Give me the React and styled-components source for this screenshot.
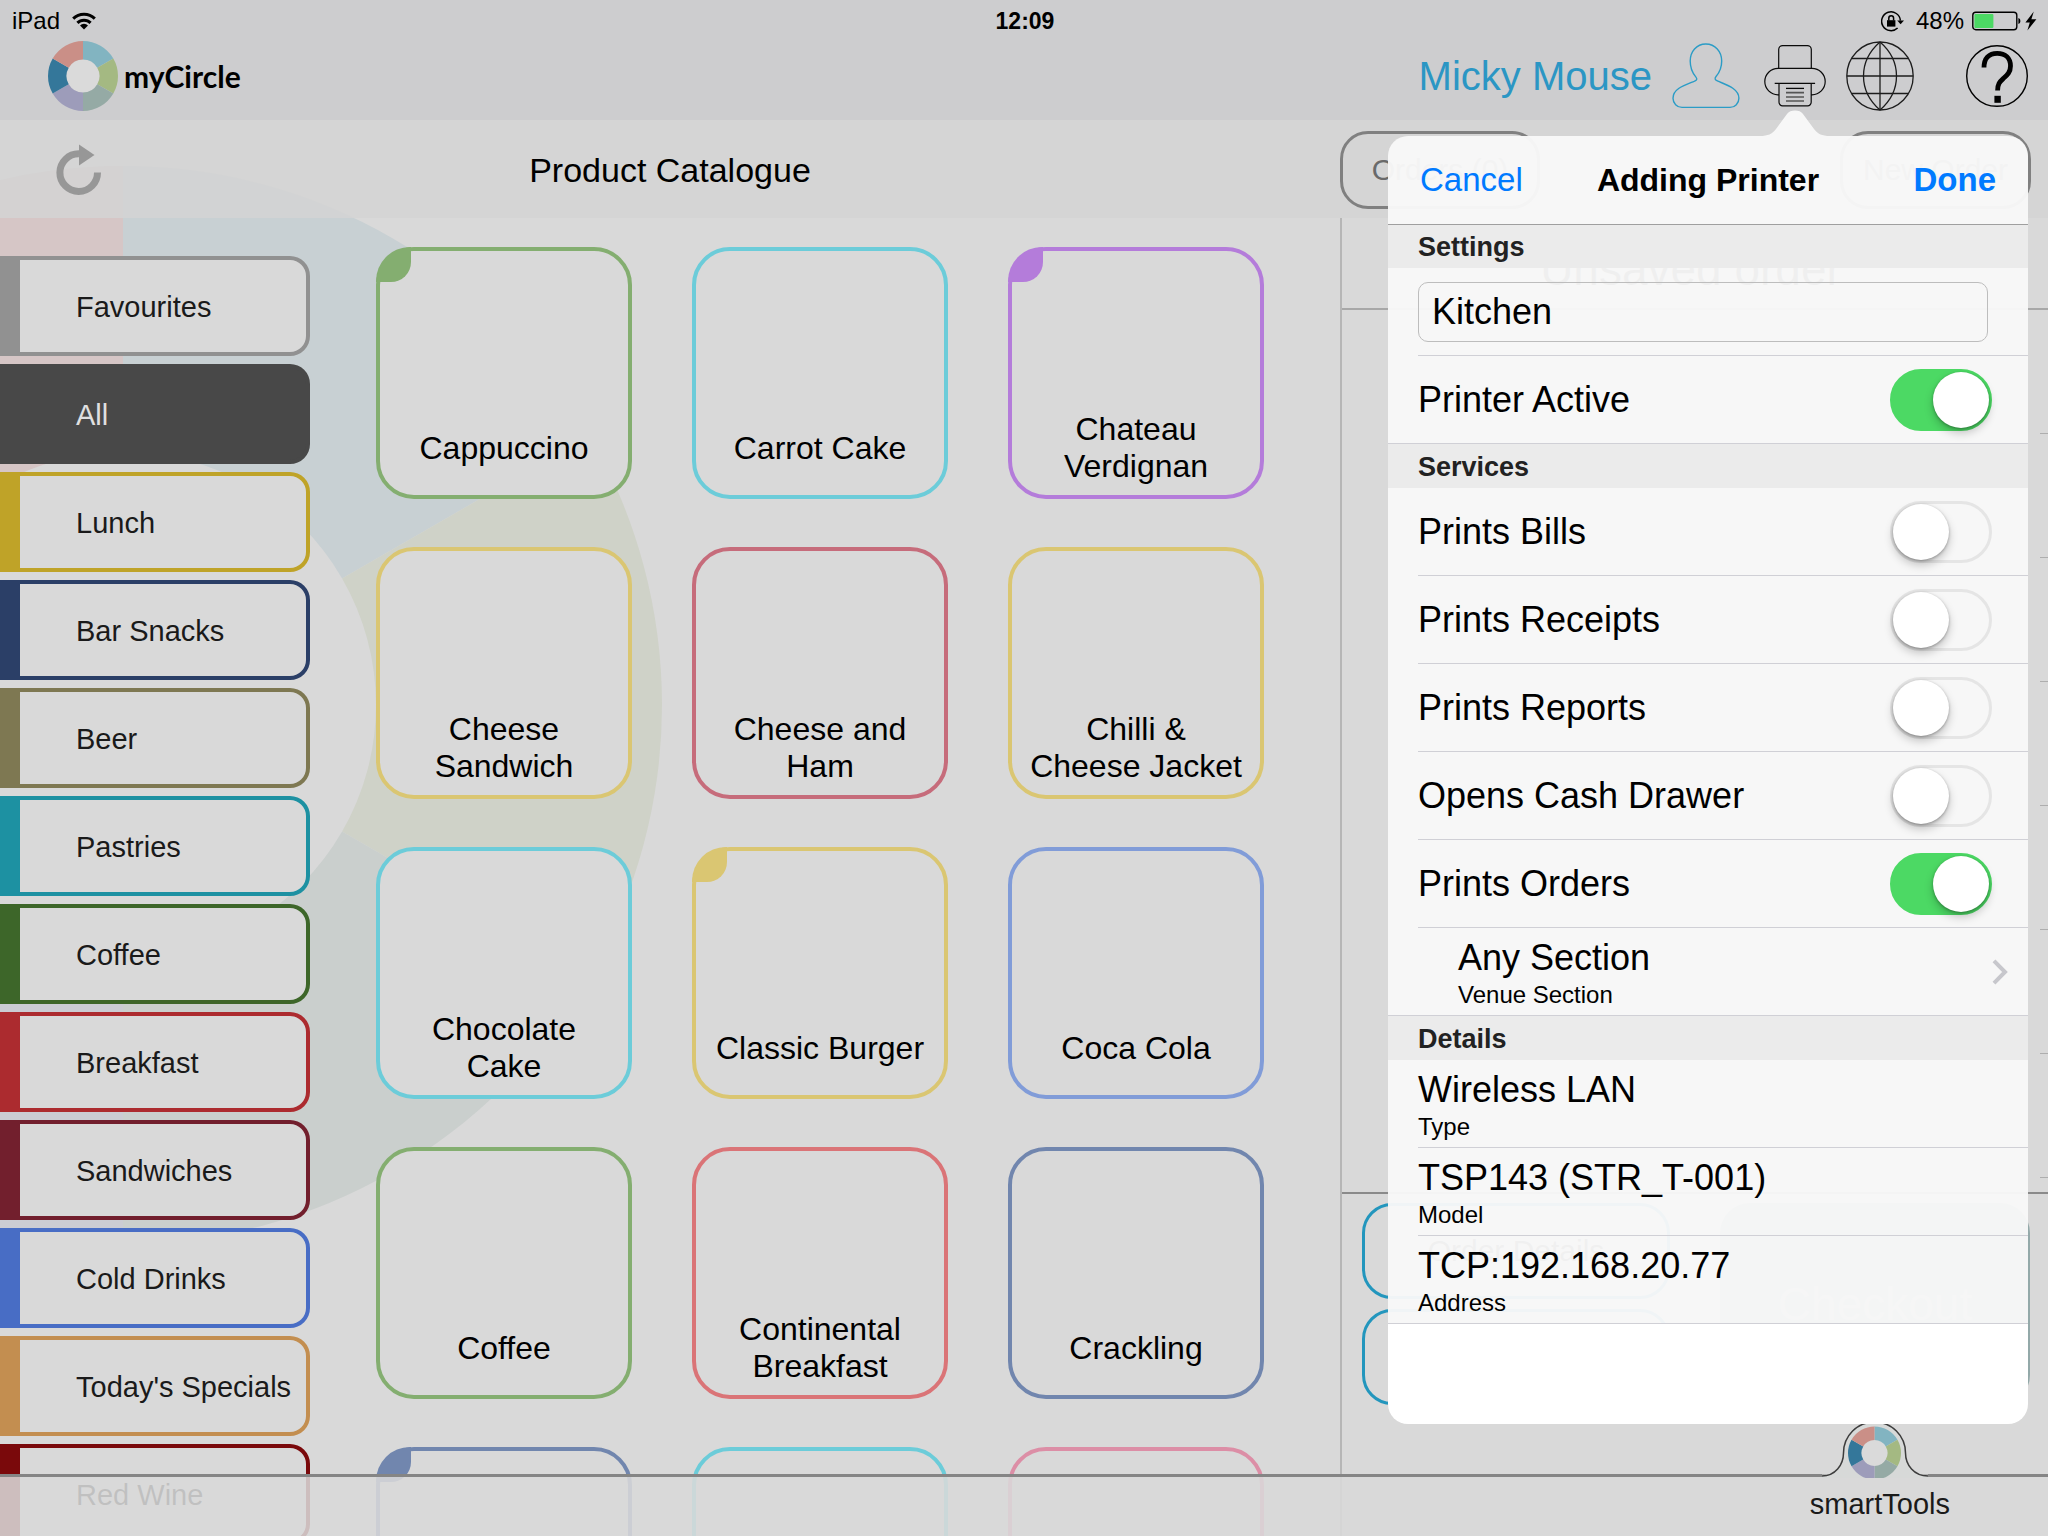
import React, { useState } from "react";
import styled, { createGlobalStyle, css } from "styled-components";

const GlobalStyle = createGlobalStyle`
  *, *::before, *::after { box-sizing: border-box; }
  body {
    margin: 0;
    background: #d9d9d9;
    color: #000;
    font-family: "Liberation Sans", Arial, Helvetica, sans-serif;
  }
  button, input { font: inherit; color: inherit; margin: 0; }
  button { background: none; border: 0; padding: 0; cursor: pointer; }
  h1, h2, h3, p, dl, dt, dd, ul { margin: 0; padding: 0; font-weight: 400; }
  ul { list-style: none; }
`;

const Page = styled.div`
  position: relative;
  display: flex;
  flex-direction: column;
  height: 100vh;
  overflow: hidden;
`;

const Backdrop = styled.svg`
  position: absolute;
  left: 0;
  top: 0;
  z-index: 0;
`;

/* ---------- header ---------- */

const Header = styled.header`
  position: relative;
  flex: none;
  height: 120px;
  background: #cdcdcf;
`;

const StatusBar = styled.div`
  display: grid;
  grid-template-columns: 1fr auto 1fr;
  align-items: center;
  height: 40px;
  padding: 2px 10px 0 12px;
  font-size: 24px;
  line-height: 28px;
`;

const StatusGroup = styled.div`
  display: flex;
  align-items: center;
  justify-content: ${(p) => (p.$end ? "flex-end" : "flex-start")};
  gap: ${(p) => (p.$end ? 8 : 12)}px;
`;

const Clock = styled.span`
  font-size: 23px;
  font-weight: 700;
`;

const RotationLock = styled.svg`
  margin-right: 4px;
`;

const NavBar = styled.div`
  display: flex;
  align-items: center;
  justify-content: space-between;
  height: 72px;
  padding: 0 20px 0 48px;
`;

const Brand = styled.a`
  display: flex;
  align-items: center;
  gap: 6px;
  color: #000;
  text-decoration: none;
  font-family: Lato, "Liberation Sans", sans-serif;
  font-size: 30px;
  font-weight: 700;
`;

const NavActions = styled.nav`
  display: flex;
  align-items: center;
  gap: 20px;
`;

const UserButton = styled.button`
  display: flex;
  align-items: center;
  gap: 20px;
  margin-right: 4px;
  color: #2b96c4;
  font-size: 40px;
  line-height: 48px;
`;

const IconButton = styled.button`
  display: flex;
  margin-left: ${(p) => p.$gap || 0}px;
`;

/* ---------- toolbar ---------- */

const Toolbar = styled.div`
  position: relative;
  flex: none;
  display: flex;
  height: 98px;
  background: rgba(212, 212, 212, 0.85);
`;

const CatalogueBar = styled.div`
  flex: 1;
  display: grid;
  grid-template-columns: 80px 1fr 80px;
  align-items: center;
  padding: 2px 56px 0;
`;

const Title = styled.h1`
  font-size: 34px;
  line-height: 40px;
  text-align: center;
`;

const OrderBar = styled.div`
  flex: none;
  display: flex;
  align-items: center;
  justify-content: space-between;
  width: 708px;
  padding: 2px 17px 0 0;
`;

const PillButton = styled.button`
  width: ${(p) => p.$width}px;
  height: 78px;
  border: 3px solid #808080;
  border-radius: 28px;
  color: #6a6a6a;
  font-size: 30px;
`;

/* ---------- workspace ---------- */

const Workspace = styled.main`
  position: relative;
  flex: 1;
  display: flex;
  min-height: 0;
`;

const Sidebar = styled.ul`
  flex: none;
  display: flex;
  flex-direction: column;
  gap: 8px;
  width: 310px;
  padding-top: 38px;
  overflow: hidden;
`;

const CategoryButton = styled.button`
  display: block;
  width: 100%;
  height: 100px;
  padding: 2px 0 0 56px;
  border: 4px solid ${(p) => p.$color};
  border-left-width: 20px;
  border-radius: 0 20px 20px 0;
  background: ${(p) => (p.$active ? p.$color : "#d9d9d9")};
  color: ${(p) => (p.$active ? "#e0e0e0" : "#1a1a1a")};
  font-size: 29px;
  line-height: 36px;
  text-align: left;
  white-space: nowrap;
`;

const ProductGrid = styled.div`
  flex: 1;
  display: grid;
  grid-template-columns: repeat(3, 1fr);
  grid-auto-rows: 252px;
  gap: 48px 60px;
  padding: 29px 76px 0 66px;
  overflow: hidden;
`;

const ProductTile = styled.button`
  position: relative;
  display: flex;
  flex-direction: column;
  justify-content: flex-end;
  padding: 0 16px 10px;
  border: 4px solid ${(p) => p.$color};
  border-radius: 38px;
  background: #d9d9d9;
  font-size: 32px;
  line-height: 37px;

  ${(p) =>
    p.$tagged &&
    css`
      &::before {
        content: "";
        position: absolute;
        left: -4px;
        top: -4px;
        width: 35px;
        height: 35px;
        border-radius: 34px 0 20px 0;
        background: ${p.$color};
      }
    `}
`;

const ProductName = styled.span`
  display: flex;
  align-items: center;
  justify-content: center;
  min-height: 74px;
  text-align: center;
`;

/* ---------- order panel ---------- */

const OrderPanel = styled.aside`
  flex: none;
  display: flex;
  flex-direction: column;
  width: 708px;
  border-left: 2px solid #b6b6b6;
`;

const OrderHeading = styled.h2`
  flex: none;
  height: 92px;
  padding: 24px 8px 0 0;
  border-bottom: 2px solid #a8a8a8;
  color: #111;
  font-size: 46px;
  line-height: 54px;
  text-align: center;
`;

const OrderLines = styled.div`
  flex: 1;
  display: flex;
  flex-direction: column;
  align-items: flex-end;
  min-height: 0;
  overflow: hidden;
`;

const OrderLine = styled.div`
  flex: none;
  width: 8px;
  height: 124px;
  border-bottom: 1px solid #aeaeae;
`;

const OrderActions = styled.div`
  flex: none;
  display: grid;
  grid-template-columns: 308px 1fr;
  grid-template-rows: 96px 96px;
  gap: 10px 50px;
  padding: 9px 18px 131px 20px;
  border-top: 2px solid #8a8a8a;
`;

const OutlineButton = styled.button`
  border: 3px solid #2396bd;
  border-radius: 30px;
  color: #222;
  font-size: 30px;
`;

const CheckoutButton = styled.button`
  grid-column: 2;
  grid-row: 1 / span 2;
  border-radius: 30px;
  background: #93a9a9;
  color: #b9c4c4;
  font-size: 46px;
`;

/* ---------- bottom bar ---------- */

const BottomBar = styled.footer`
  position: absolute;
  left: 0;
  right: 0;
  bottom: 0;
  display: flex;
  justify-content: flex-end;
  height: 62px;
  padding-right: 98px;
  border-top: 3px solid #858585;
  background: rgba(217, 217, 217, 0.87);
`;

const ToolsButton = styled.button`
  display: flex;
  flex-direction: column;
  align-items: center;
  justify-content: flex-end;
  height: 114px;
  margin-top: -55px;
  padding-bottom: 16px;
  color: #1a1a1a;
  font-size: 29px;
  line-height: 32px;

  svg { margin-right: 10px; margin-bottom: 10px; }
`;

/* ---------- popover ---------- */

const Popover = styled.div`
  position: absolute;
  top: 110px;
  right: 20px;
  z-index: 5;
  width: 640px;
`;

const PopoverArrow = styled.svg`
  display: block;
  margin-left: 372px;
`;

const PopoverBody = styled.form`
  border-radius: 20px;
  overflow: hidden;
`;

const translucent = "rgba(248, 248, 248, 0.965)";

const PopoverHeader = styled.div`
  display: grid;
  grid-template-columns: 1fr auto 1fr;
  align-items: center;
  height: 88px;
  padding: 0 32px;
  background: ${translucent};
  font-size: 33px;
  line-height: 40px;
`;

const PopoverTitle = styled.h2`
  && { font-weight: 700; }
  font-size: 32px;
`;

const HeaderAction = styled.button`
  justify-self: ${(p) => (p.$primary ? "end" : "start")};
  color: #007aff;
  font-weight: ${(p) => (p.$primary ? 700 : 400)};
`;

const SectionTitle = styled.h3`
  && { font-weight: 700; }
  display: flex;
  align-items: center;
  height: 44px;
  padding: 2px 0 0 30px;
  border-top: ${(p) => (p.$first ? "1px solid #9f9f9f" : "0")};
  background: #ebebeb;
  color: #222;
  font-size: 27px;
`;

const Row = styled.div`
  height: 88px;
  padding-left: 30px;
  background: ${translucent};
  border-bottom: ${(p) => (p.$last ? "1px solid #d0d0d6" : "0")};
`;

const RowInner = styled.div`
  display: flex;
  align-items: center;
  justify-content: space-between;
  height: 100%;
  padding-right: ${(p) => p.$right || 36}px;
  border-bottom: ${(p) => (p.$last ? "0" : "1px solid #d0d0d6")};
  font-size: 36px;
  line-height: 40px;
`;

const NameInput = styled.input`
  width: 100%;
  height: 60px;
  padding: 0 13px;
  border: 1px solid #bdbdbd;
  border-radius: 10px;
  background: transparent;
  outline: none;
`;

const Switch = styled.input`
  appearance: none;
  position: relative;
  flex: none;
  width: 102px;
  height: 62px;
  border: 3px solid #e5e5e5;
  border-radius: 31px;
  background: transparent;
  cursor: pointer;

  &::before {
    content: "";
    position: absolute;
    left: 0;
    top: 0;
    width: 56px;
    height: 56px;
    border-radius: 50%;
    background: #fff;
    box-shadow: 0 5px 10px rgba(0, 0, 0, 0.22), 0 1px 3px rgba(0, 0, 0, 0.3);
  }

  &:checked {
    border-color: #4cd964;
    background: #4cd964;
  }

  &:checked::before { left: 40px; }
`;

const SectionButton = styled.button`
  display: flex;
  align-items: center;
  justify-content: space-between;
  width: 100%;
  height: 100%;
  padding: 0 20px 0 40px;
  text-align: left;
`;

const Stack = styled.div`
  display: flex;
  flex-direction: ${(p) => (p.$reverse ? "column-reverse" : "column")};
  gap: 3px;
  padding-top: 3px;
`;

const stackMain = css`
  font-size: 36px;
  line-height: 40px;
`;
const stackSub = css`
  font-size: 24px;
  line-height: 28px;
`;
const MainText = styled.span`${stackMain}`;
const SubText = styled.span`${stackSub}`;
const DetailValue = styled.dd`${stackMain}`;
const DetailTerm = styled.dt`${stackSub}`;

const PopoverFoot = styled.div`
  height: 100px;
  background: #fff;
`;

/* ---------- drawings ---------- */

function wedge(cx, cy, outer, inner, from) {
  const pt = (r, deg) => {
    const a = ((deg - 90) * Math.PI) / 180;
    return `${(cx + r * Math.cos(a)).toFixed(2)} ${(cy + r * Math.sin(a)).toFixed(2)}`;
  };
  return `M${pt(outer, from)} A${outer} ${outer} 0 0 1 ${pt(outer, from + 60)} L${pt(inner, from + 60)} A${inner} ${inner} 0 0 0 ${pt(inner, from)} Z`;
}

const ringColors = ["#82b4c1", "#a4b982", "#95aaa5", "#9d9cba", "#34779a", "#ca8f87"];
const paleColors = ["#c8d0d3", "#cfd2c8", "#cacfcd", "#cbccd3", "#bcc6cc", "#d6c6c6"];

function Ring({ size, inner }) {
  const c = size / 2;
  return (
    <svg width={size} height={size} viewBox={`0 0 ${size} ${size}`} aria-hidden="true">
      <circle cx={c} cy={c} r={inner} fill="#dadada" />
      {ringColors.map((color, i) => (
        <path key={color} d={wedge(c, c, c, inner, i * 60)} fill={color} />
      ))}
    </svg>
  );
}

function BackdropRing() {
  return (
    <Backdrop width="664" height="1250" aria-hidden="true">
      {paleColors.map((color, i) => (
        <path key={color} d={wedge(123, 705, 539, 253, i * 60)} fill={color} />
      ))}
    </Backdrop>
  );
}

const WifiIcon = () => (
  <svg width="24" height="18" viewBox="0 0 24 18" fill="none" stroke="#000" strokeWidth="3" aria-hidden="true">
    <path d="M1.2 6.6a15.4 15.4 0 0 1 21.6 0" />
    <path d="M5.4 10.9a9.4 9.4 0 0 1 13.2 0" />
    <path d="M12 17.6l-4-4.2a5.8 5.8 0 0 1 8 0z" fill="#000" stroke="none" />
  </svg>
);

const RotationLockIcon = () => (
  <RotationLock width="23" height="21" viewBox="0 0 23 21" fill="none" stroke="#000" strokeWidth="1.5" aria-hidden="true">
    <path d="M16.6 17A9.4 9.4 0 1 1 19.4 9.6" />
    <path d="M16.2 9.4h6.8l-3.4 3.8z" fill="#000" stroke="none" />
    <rect x="6" y="9.2" width="8.4" height="6.4" fill="#000" stroke="none" />
    <path d="M7.8 9.4V7.2a2.4 2.4 0 0 1 4.8 0v2.2" />
  </RotationLock>
);

const BatteryIcon = () => (
  <svg width="66" height="20" viewBox="0 0 66 20" aria-hidden="true">
    <rect x="0.8" y="1.3" width="44" height="17.4" rx="3" fill="none" stroke="#000" strokeWidth="1.4" />
    <rect x="2.4" y="3" width="19" height="14" rx="1" fill="#4cd964" />
    <path d="M46.4 7c2.6.6 2.6 5.4 0 6z" fill="#000" />
    <path d="M61.8 0.6L53.4 11.4h4.4L55.4 19.4l9-11.200h-5z" fill="#000" />
  </svg>
);

const PersonIcon = () => (
  <svg width="68" height="66" viewBox="0 0 68 66" fill="none" stroke="#2b9cc6" strokeWidth="1.4" aria-hidden="true">
    <path d="M33.8 1C24.5 1 18.2 8.5 18.2 18c0 6.4 2.1 11.6 5.4 15.6 2.2 2.6 1.2 3.6-1.5 4.8C13 42 1 45.6 1 55.2 1 60.2 5 64.400 10 64.400h48c5 0 8.900-4.200 8.900-9.200 0-9.600-12-13.200-21-17-2.800-1.200-3.800-2.400-1.700-4.900C47.500 29.400 49.700 24.400 49.700 18 49.700 8.500 43.200 1 33.800 1z" />
  </svg>
);

const PrinterIcon = () => (
  <svg width="62" height="62" viewBox="0 0 62 62" fill="none" stroke="#0a0a0a" strokeWidth="1.2" aria-hidden="true">
    <path d="M14.7 23.5V4.6a4 4 0 0 1 4-4h24.6a4 4 0 0 1 4 4v19" />
    <path d="M15 49.8h-1A13.2 13.2 0 0 1 14 23.4h34a13.2 13.2 0 0 1 0 26.4h-1" />
    <path d="M10.7 38.3h40.4" />
    <path d="M15 38.3v19a3.5 3.5 0 0 0 3.5 3.5h25.2a3.5 3.5 0 0 0 3.5-3.5v-19" />
    <path d="M22 43.4h18" strokeWidth="1.3" />
    <path d="M22 47.6h18M22 52h18M22 56h18" stroke="#555" strokeWidth="1.7" />
  </svg>
);

const GlobeIcon = () => (
  <svg width="68" height="70" viewBox="0 0 68 70" fill="none" stroke="#1c1c1c" strokeWidth="1.3" aria-hidden="true">
    <ellipse cx="34" cy="35" rx="33.2" ry="34" />
    <path d="M34 1v68M1 35h66M6 17.5h56M6 52.5h56" />
    <path d="M34 1C12 20 12 50 34 69M34 1C56 20 56 50 34 69" />
  </svg>
);

const HelpIcon = () => (
  <svg width="62" height="62" viewBox="0 0 62 62" fill="none" stroke="#000" aria-hidden="true">
    <circle cx="31" cy="31" r="30.3" strokeWidth="1.4" />
    <path d="M18 22.5C18 13 23 8.3 31.2 8.3S44.5 13.2 44.5 21c0 6.5-3.6 9.3-7.3 12.6-3.600 3.300-5.600 5.600-5.600 12" strokeWidth="4.8" />
    <path d="M28.4 50.8h6.4v7h-6.4z" fill="#000" stroke="none" />
  </svg>
);

const RefreshIcon = () => (
  <svg width="46" height="52" viewBox="0 0 46 52" aria-hidden="true">
    <path d="M23 9.8A18.8 18.8 0 1 0 41.5 28.5" fill="none" stroke="#979797" strokeWidth="7" />
    <path d="M23 0.5l15.5 10.500L23 21.500z" fill="#979797" />
  </svg>
);

const ToolsIcon = () => (
  <svg width="106" height="56" viewBox="0 0 106 56" aria-hidden="true">
    <path d="M0 52.5C13 52.5 21.5 43 21.5 31a31 31 0 0 1 62 0c0 12 8.5 21.5 22.5 21.5V56H0z" fill="#d7d9d8" />
    <path d="M0 54C13 54 21.5 43 21.5 31a31 31 0 0 1 62 0c0 12 8.5 23 22.5 23" fill="none" stroke="#3d3d3d" strokeWidth="1.5" />
    <circle cx="52.5" cy="31" r="13" fill="#dadada" />
    {ringColors.map((color, i) => (
      <path key={color} d={wedge(52.5, 31, 26.5, 13, i * 60)} fill={color} />
    ))}
  </svg>
);

const ChevronIcon = () => (
  <svg width="16" height="26" viewBox="0 0 16 26" fill="none" stroke="#c7c7cc" strokeWidth="4" aria-hidden="true">
    <path d="M2 1.8L13 13 2 24.2" />
  </svg>
);

/* ---------- data ---------- */

const categories = [
  ["Favourites", "#919191"],
  ["All", "#484848", true],
  ["Lunch", "#bfa328"],
  ["Bar Snacks", "#2b3f67"],
  ["Beer", "#7e7852"],
  ["Pastries", "#1d91a2"],
  ["Coffee", "#3d6629"],
  ["Breakfast", "#ac2b2f"],
  ["Sandwiches", "#721f2d"],
  ["Cold Drinks", "#486dc5"],
  ["Today's Specials", "#c38e50"],
  ["Red Wine", "#7a090b"],
];

const products = [
  { name: "Cappuccino", color: "#84ae70", tagged: true },
  { name: "Carrot Cake", color: "#6cccd9" },
  { name: "Chateau Verdignan", color: "#b47cda", tagged: true },
  { name: "Cheese Sandwich", color: "#dac672" },
  { name: "Cheese and Ham", color: "#c66c7b" },
  { name: "Chilli & Cheese Jacket", color: "#dac672" },
  { name: "Chocolate Cake", color: "#6cccd9" },
  { name: "Classic Burger", color: "#dac672", tagged: true },
  { name: "Coca Cola", color: "#819cd8" },
  { name: "Coffee", color: "#84ae70" },
  { name: "Continental Breakfast", color: "#da7477" },
  { name: "Crackling", color: "#7186ae" },
  { name: "", color: "#7186ae", tagged: true },
  { name: "", color: "#6cccd9" },
  { name: "", color: "#dc8ea6" },
];

const services = [
  ["bills", "Prints Bills", false],
  ["receipts", "Prints Receipts", false],
  ["reports", "Prints Reports", false],
  ["drawer", "Opens Cash Drawer", false],
  ["orders", "Prints Orders", true],
];

const details = [
  ["Type", "Wireless LAN"],
  ["Model", "TSP143 (STR_T-001)"],
  ["Address", "TCP:192.168.20.77"],
];

/* ---------- components ---------- */

function SwitchRow({ id, label, on, last }) {
  return (
    <Row $last={last}>
      <RowInner $last={last}>
        <label htmlFor={id}>{label}</label>
        <Switch id={id} type="checkbox" role="switch" defaultChecked={on} />
      </RowInner>
    </Row>
  );
}

function PrinterPopover() {
  const [name, setName] = useState("Kitchen");
  return (
    <Popover role="dialog" aria-labelledby="printer-title">
      <PopoverArrow width="70" height="26" viewBox="0 0 70 26" aria-hidden="true">
        <path
          d="M0 26C8 26 12 24 16 19L27 4C30-.6 40-.6 43 4L54 19C58 24 62 26 70 26Z"
          fill={translucent}
        />
      </PopoverArrow>
      <PopoverBody onSubmit={(e) => e.preventDefault()}>
        <PopoverHeader>
          <HeaderAction type="button">Cancel</HeaderAction>
          <PopoverTitle id="printer-title">Adding Printer</PopoverTitle>
          <HeaderAction type="submit" $primary>Done</HeaderAction>
        </PopoverHeader>

        <SectionTitle $first>Settings</SectionTitle>
        <Row>
          <RowInner $right={40}>
            <NameInput
              type="text"
              aria-label="Printer name"
              value={name}
              onChange={(e) => setName(e.target.value)}
            />
          </RowInner>
        </Row>
        <SwitchRow id="active" label="Printer Active" on last />

        <SectionTitle>Services</SectionTitle>
        {services.map(([id, label, on]) => (
          <SwitchRow key={id} id={id} label={label} on={on} />
        ))}
        <Row $last>
          <SectionButton type="button">
            <Stack>
              <MainText>Any Section</MainText>
              <SubText>Venue Section</SubText>
            </Stack>
            <ChevronIcon />
          </SectionButton>
        </Row>

        <SectionTitle>Details</SectionTitle>
        <dl>
          {details.map(([term, value], i) => {
            const last = i === details.length - 1;
            return (
              <Row key={term} $last={last}>
                <RowInner $last={last}>
                  <Stack $reverse>
                    <DetailTerm>{term}</DetailTerm>
                    <DetailValue>{value}</DetailValue>
                  </Stack>
                </RowInner>
              </Row>
            );
          })}
        </dl>
        <PopoverFoot />
      </PopoverBody>
    </Popover>
  );
}

export default function App() {
  return (
    <Page>
      <GlobalStyle />
      <BackdropRing />

      <Header>
        <StatusBar>
          <StatusGroup>
            <span>iPad</span>
            <WifiIcon />
          </StatusGroup>
          <Clock>12:09</Clock>
          <StatusGroup $end>
            <RotationLockIcon />
            <span>48%</span>
            <BatteryIcon />
          </StatusGroup>
        </StatusBar>
        <NavBar>
          <Brand href="#home">
            <Ring size={70} inner={16.5} />
            myCircle
          </Brand>
          <NavActions>
            <UserButton>
              Micky Mouse
              <PersonIcon />
            </UserButton>
            <IconButton aria-label="Printers"><PrinterIcon /></IconButton>
            <IconButton aria-label="Language"><GlobeIcon /></IconButton>
            <IconButton aria-label="Help" $gap={32}><HelpIcon /></IconButton>
          </NavActions>
        </NavBar>
      </Header>

      <Toolbar>
        <CatalogueBar>
          <IconButton aria-label="Refresh"><RefreshIcon /></IconButton>
          <Title>Product Catalogue</Title>
        </CatalogueBar>
        <OrderBar>
          <PillButton $width={200}>Orders (0)</PillButton>
          <PillButton $width={191}>New Order</PillButton>
        </OrderBar>
      </Toolbar>

      <Workspace>
        <Sidebar>
          {categories.map(([name, color, active]) => (
            <li key={name}>
              <CategoryButton $color={color} $active={active}>{name}</CategoryButton>
            </li>
          ))}
        </Sidebar>
        <ProductGrid>
          {products.map(({ name, color, tagged }, i) => (
            <ProductTile key={i} $color={color} $tagged={tagged} aria-label={name || "Product"}>
              <ProductName>{name}</ProductName>
            </ProductTile>
          ))}
        </ProductGrid>
        <OrderPanel>
          <OrderHeading>Unsaved order</OrderHeading>
          <OrderLines>
            {Array.from({ length: 7 }, (_, i) => (
              <OrderLine key={i} />
            ))}
          </OrderLines>
          <OrderActions>
            <OutlineButton>Order Details</OutlineButton>
            <CheckoutButton>Checkout</CheckoutButton>
            <OutlineButton aria-label="Order options" />
          </OrderActions>
        </OrderPanel>
      </Workspace>

      <BottomBar>
        <ToolsButton>
          <ToolsIcon />
          smartTools
        </ToolsButton>
      </BottomBar>

      <PrinterPopover />
    </Page>
  );
}
